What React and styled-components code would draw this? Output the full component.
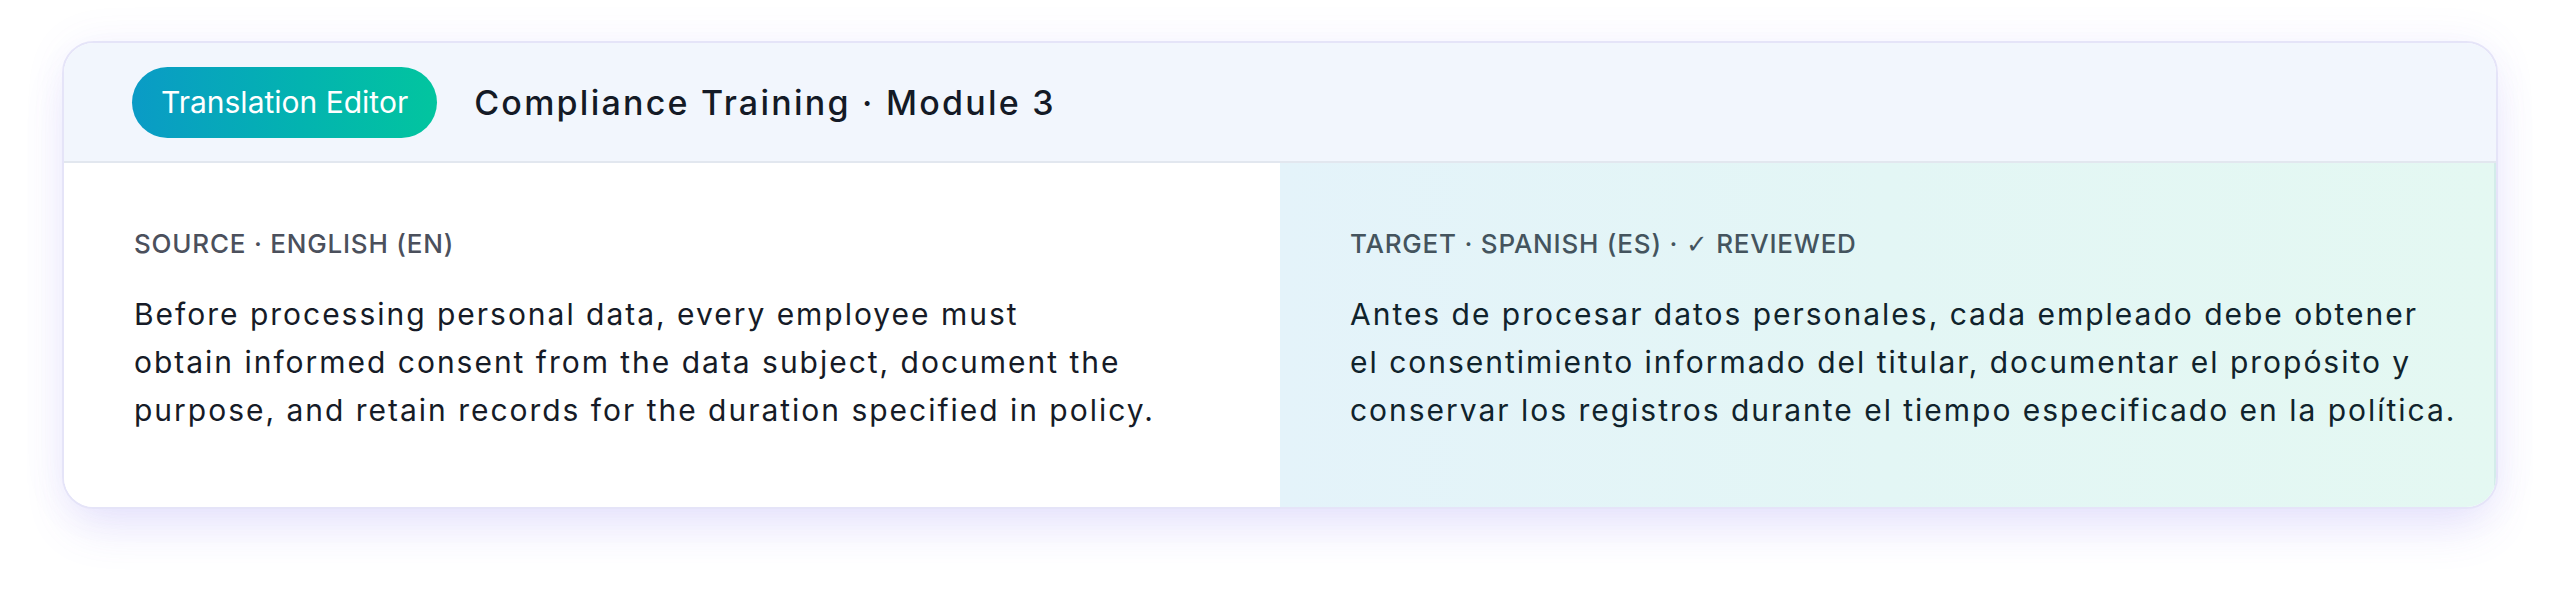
import React from 'react';
import styled, { createGlobalStyle } from 'styled-components';

const GlobalStyle = createGlobalStyle`
  html, body {
    margin: 0;
    padding: 0;
    background: #ffffff;
  }

  body {
    font-family: Inter, 'Noto Sans', 'DejaVu Sans', sans-serif;
    -webkit-font-smoothing: antialiased;
  }
`;

const Page = styled.main`
  padding: 41px 62px 80px;
  background: #ffffff;
`;

const Card = styled.section`
  border: 2px solid #e5e4f8;
  border-radius: 32px;
  overflow: hidden;
  background: #ffffff;
  box-shadow:
    0 26px 48px -10px rgba(112, 96, 236, 0.16),
    0 0 44px rgba(112, 96, 236, 0.07);
`;

Card.Header = styled.header`
  display: flex;
  align-items: center;
  gap: 37px;
  height: 118px;
  padding: 0 68px;
  background: #f2f6fd;
  border-bottom: 2px solid #e2e7ef;
`;

const Badge = styled.span`
  display: inline-flex;
  align-items: center;
  height: 71px;
  padding: 0 29px;
  border-radius: 999px;
  background: linear-gradient(90deg, #0a9bc6 0%, #03b3b0 55%, #02c59f 100%);
  color: #ffffff;
  font-size: 30px;
  font-weight: 400;
`;

const Title = styled.h1`
  margin: 0;
  color: #141a26;
  font-size: 34px;
  font-weight: 500;
  letter-spacing: 0.066em;
`;

const Panes = styled.div`
  display: grid;
  grid-template-columns: 1fr 1fr;
  height: 344px;
`;

const Pane = styled.div`
  padding: 63px 16px 0 70px;
  background: ${({ $tone }) =>
    $tone === 'target'
      ? 'linear-gradient(90deg, #e4f3fa 0%, #e3f6f5 50%, #e4f8f2 100%)'
      : '#ffffff'};
  border-right: ${({ $tone }) =>
    $tone === 'target' ? '2px solid #d3ecea' : 'none'};
`;

Pane.Label = styled.div`
  margin-bottom: 28px;
  color: ${({ $tone }) => ($tone === 'target' ? '#44545e' : '#4b505c')};
  font-size: 26px;
  line-height: 36px;
  font-weight: 500;
  letter-spacing: 0.03em;
  text-transform: uppercase;
`;

Pane.Text = styled.p`
  margin: 0;
  color: ${({ $tone }) => ($tone === 'target' ? '#10232c' : '#161b27')};
  font-size: 30px;
  line-height: 48px;
  font-weight: 400;
  letter-spacing: 0.066em;
  white-space: nowrap;
`;

const Check = styled.span`
  font-family: 'DejaVu Sans', sans-serif;
  font-weight: 400;
`;

const segments = [
  {
    tone: 'source',
    label: 'Source · English (EN)',
    lines: [
      'Before processing personal data, every employee must',
      'obtain informed consent from the data subject, document the',
      'purpose, and retain records for the duration specified in policy.',
    ],
  },
  {
    tone: 'target',
    label: (
      <>
        Target · Spanish (ES) · <Check>✓</Check> Reviewed
      </>
    ),
    lines: [
      'Antes de procesar datos personales, cada empleado debe obtener',
      'el consentimiento informado del titular, documentar el propósito y',
      'conservar los registros durante el tiempo especificado en la política.',
    ],
  },
];

export default function App() {
  return (
    <>
      <GlobalStyle />
      <Page>
        <Card>
          <Card.Header>
            <Badge>Translation Editor</Badge>
            <Title>Compliance Training · Module 3</Title>
          </Card.Header>
          <Panes>
            {segments.map((seg) => (
              <Pane key={seg.tone} $tone={seg.tone}>
                <Pane.Label $tone={seg.tone}>{seg.label}</Pane.Label>
                <Pane.Text $tone={seg.tone}>
                  {seg.lines.map((line, i) => (
                    <React.Fragment key={i}>
                      {line}
                      {i < seg.lines.length - 1 && <br />}
                    </React.Fragment>
                  ))}
                </Pane.Text>
              </Pane>
            ))}
          </Panes>
        </Card>
      </Page>
    </>
  );
}
